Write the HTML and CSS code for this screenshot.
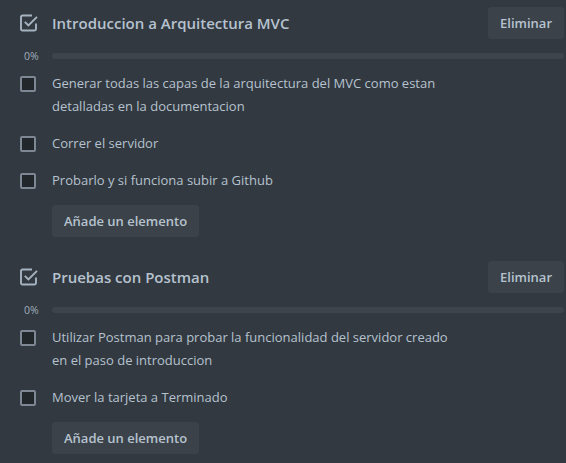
FILE: index.html
```html
<!DOCTYPE html>
<html lang="es">
<head>
<meta charset="utf-8">
<title>Checklists</title>
<link rel="stylesheet" href="styles.css">
</head>
<body>
<section class="checklist">
  <div class="cl-header">
    <span class="cl-icon">
      <svg viewBox="0 0 18 18" width="18" height="18"><path d="M16 9.5v5.5a1.5 1.5 0 0 1-1.5 1.5H2.5A1.5 1.5 0 0 1 1 15V3a1.5 1.5 0 0 1 1.5-1.5H12" fill="none" stroke="currentColor" stroke-width="1.9"/><path d="M4.8 7.8l3.6 3.6L17 2.8" fill="none" stroke="currentColor" stroke-width="1.9"/></svg>
    </span>
    <h3 class="cl-title">Introduccion a Arquitectura MVC</h3>
    <button class="btn">Eliminar</button>
  </div>
  <div class="cl-progress">
    <span class="pct">0%</span>
    <div class="bar"></div>
  </div>
  <ul class="items">
    <li class="item"><span class="box"></span><span class="txt">Generar todas las capas de la arquitectura del MVC como estan detalladas en la documentacion</span></li>
    <li class="item"><span class="box"></span><span class="txt">Correr el servidor</span></li>
    <li class="item"><span class="box"></span><span class="txt">Probarlo y si funciona subir a Github</span></li>
  </ul>
  <button class="btn add">Añade un elemento</button>
</section>
<section class="checklist">
  <div class="cl-header">
    <span class="cl-icon">
      <svg viewBox="0 0 18 18" width="18" height="18"><path d="M16 9.5v5.5a1.5 1.5 0 0 1-1.5 1.5H2.5A1.5 1.5 0 0 1 1 15V3a1.5 1.5 0 0 1 1.5-1.5H12" fill="none" stroke="currentColor" stroke-width="1.9"/><path d="M4.8 7.8l3.6 3.6L17 2.8" fill="none" stroke="currentColor" stroke-width="1.9"/></svg>
    </span>
    <h3 class="cl-title">Pruebas con Postman</h3>
    <button class="btn">Eliminar</button>
  </div>
  <div class="cl-progress">
    <span class="pct">0%</span>
    <div class="bar"></div>
  </div>
  <ul class="items">
    <li class="item"><span class="box"></span><span class="txt">Utilizar Postman para probar la funcionalidad del servidor creado en el paso de introduccion</span></li>
    <li class="item"><span class="box"></span><span class="txt">Mover la tarjeta a Terminado</span></li>
  </ul>
  <button class="btn add">Añade un elemento</button>
</section>
</body>
</html>
```
FILE: styles.css
```css
html, body {
  margin: 0;
  padding: 0;
  background: #323940;
}
body {
  font-family: "Open Sans", "Noto Sans", sans-serif;
  color: #b6c2cf;
  font-size: 13px;
}
.checklist {
  padding: 7px 2px 0 20px;
  margin-bottom: 17px;
}
.cl-header {
  display: flex;
  align-items: center;
  height: 32px;
}
.cl-icon {
  width: 32px;
  flex: none;
  display: flex;
  align-items: center;
  color: #a6b3c0;
}
.cl-icon svg { display: block; }
.cl-title {
  flex: 1;
  margin: 0;
  font-size: 15px;
  font-weight: 600;
  color: #b6c2cf;
}
.btn {
  font-family: inherit;
  font-size: 13px;
  font-weight: 600;
  color: #b6c2cf;
  background: #3b4249;
  border: none;
  border-radius: 3px;
  height: 32px;
  padding: 0 12px;
}
.cl-progress {
  display: flex;
  align-items: center;
  height: 18px;
  margin-top: 8px;
}
.pct {
  width: 28px;
  padding-left: 4px;
  font-size: 10.5px;
  color: #9fadbc;
}
.bar {
  flex: 1;
  height: 6px;
  border-radius: 3px;
  background: #3d444c;
}
.items {
  list-style: none;
  margin: 0;
  padding: 0;
}
.item {
  display: flex;
  align-items: flex-start;
  padding: 7px 0;
  line-height: 23px;
}
.box {
  flex: none;
  width: 12px;
  height: 12px;
  margin-top: 4px;
  margin-right: 16px;
  border: 2px solid #7d8894;
  border-radius: 2px;
  background: #22272b;
}
.txt {
  max-width: 400px;
  color: #b6c2cf;
}
.add {
  margin: 6px 0 0 32px;
}
```
